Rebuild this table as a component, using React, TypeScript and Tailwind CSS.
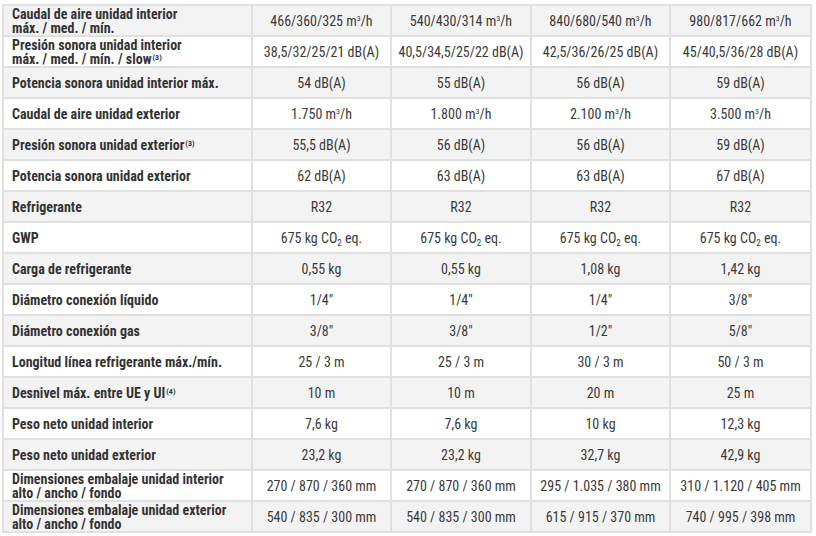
import React from "react";

type Row = { label: React.ReactNode; vals: React.ReactNode[]; two?: boolean };

const m3 = (s: string) => (
  <>
    {s} m<span className="text-[8px] relative -top-[5px] leading-none">3</span>/h
  </>
);
const co2 = (
  <>
    675 kg CO<span className="text-[9px] relative top-[3px] leading-none">2</span> eq.
  </>
);
const sup = (s: string) => (
  <span className="text-[8px] relative -top-[4px] leading-none ml-[1px] font-bold">{s}</span>
);

const rows: Row[] = [
  {
    label: (
      <>
        Caudal de aire unidad interior
        <br />
        máx. / med. / mín.
      </>
    ),
    two: true,
    vals: [m3("466/360/325"), m3("540/430/314"), m3("840/680/540"), m3("980/817/662")],
  },
  {
    label: (
      <>
        Presión sonora unidad interior
        <br />
        máx. / med. / mín. / slow{sup("(3)")}
      </>
    ),
    two: true,
    vals: ["38,5/32/25/21 dB(A)", "40,5/34,5/25/22 dB(A)", "42,5/36/26/25 dB(A)", "45/40,5/36/28 dB(A)"],
  },
  { label: "Potencia sonora unidad interior máx.", vals: ["54 dB(A)", "55 dB(A)", "56 dB(A)", "59 dB(A)"] },
  { label: "Caudal de aire unidad exterior", vals: [m3("1.750"), m3("1.800"), m3("2.100"), m3("3.500")] },
  { label: <>Presión sonora unidad exterior{sup("(3)")}</>, vals: ["55,5 dB(A)", "56 dB(A)", "56 dB(A)", "59 dB(A)"] },
  { label: "Potencia sonora unidad exterior", vals: ["62 dB(A)", "63 dB(A)", "63 dB(A)", "67 dB(A)"] },
  { label: "Refrigerante", vals: ["R32", "R32", "R32", "R32"] },
  { label: "GWP", vals: [co2, co2, co2, co2] },
  { label: "Carga de refrigerante", vals: ["0,55 kg", "0,55 kg", "1,08 kg", "1,42 kg"] },
  { label: "Diámetro conexión líquido", vals: ["1/4\"", "1/4\"", "1/4\"", "3/8\""] },
  { label: "Diámetro conexión gas", vals: ["3/8\"", "3/8\"", "1/2\"", "5/8\""] },
  { label: "Longitud línea refrigerante máx./mín.", vals: ["25 / 3 m", "25 / 3 m", "30 / 3 m", "50 / 3 m"] },
  { label: <>Desnivel máx. entre UE y UI{sup("(4)")}</>, vals: ["10 m", "10 m", "20 m", "25 m"] },
  { label: "Peso neto unidad interior", vals: ["7,6 kg", "7,6 kg", "10 kg", "12,3 kg"] },
  { label: "Peso neto unidad exterior", vals: ["23,2 kg", "23,2 kg", "32,7 kg", "42,9 kg"] },
  {
    label: (
      <>
        Dimensiones embalaje unidad interior
        <br />
        alto / ancho / fondo
      </>
    ),
    two: true,
    vals: ["270 / 870 / 360 mm", "270 / 870 / 360 mm", "295 / 1.035 / 380 mm", "310 / 1.120 / 405 mm"],
  },
  {
    label: (
      <>
        Dimensiones embalaje unidad exterior
        <br />
        alto / ancho / fondo
      </>
    ),
    two: true,
    vals: ["540 / 835 / 300 mm", "540 / 835 / 300 mm", "615 / 915 / 370 mm", "740 / 995 / 398 mm"],
  },
];

export default function App() {
  return (
    <div
      className="w-[816px] h-[536px] bg-white overflow-hidden pt-[4px] pl-[2px] text-[#3a3a3a]"
      style={{ fontFamily: '"Liberation Sans Narrow", "Roboto Condensed", Roboto, sans-serif' }}
    >
      <table className="border-collapse table-fixed w-[808px]">
        <colgroup>
          <col className="w-[249px]" />
          <col className="w-[139px]" />
          <col className="w-[140px]" />
          <col className="w-[139px]" />
          <col className="w-[141px]" />
        </colgroup>
        <tbody>
          {rows.map((r, i) => (
            <tr key={i} className={i % 2 === 0 ? "bg-[#f3f3f3]" : "bg-white"}>
              <td
                className={
                  "h-[31px] border-2 border-[#e0e0e0] pl-[8px] pr-1 font-bold text-[14px] text-[#333] " +
                  (r.two ? "leading-[14px] pt-[1px]" : "leading-[16px]")
                }
              >
                {r.label}
              </td>
              {r.vals.map((v, j) => (
                <td
                  key={j}
                  className="h-[31px] border-2 border-[#e0e0e0] text-center text-[14px] leading-[16px] text-[#3a3a3a] whitespace-nowrap"
                >
                  {v}
                </td>
              ))}
            </tr>
          ))}
        </tbody>
      </table>
    </div>
  );
}
